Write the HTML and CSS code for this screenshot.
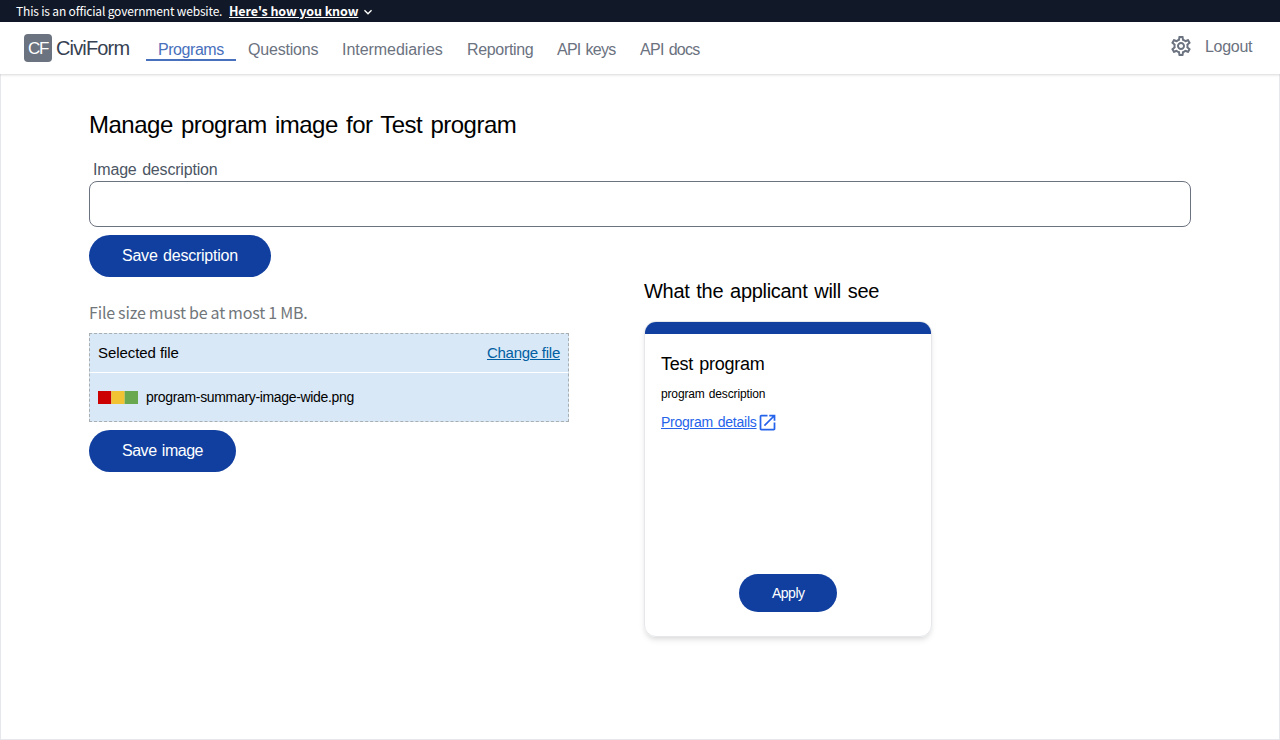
FILE: index.html
```html
<!DOCTYPE html>
<html lang="en">
<head>
<meta charset="utf-8">
<title>Manage program image</title>
<link rel="stylesheet" href="styles.css">
</head>
<body>
<div class="banner"><span class="banner-text">This is an official government website.</span><a class="banner-link">Here's how you know</a><svg class="chevron" viewBox="0 0 24 24"><path fill="currentColor" d="M16.59 8.59 12 13.17 7.41 8.59 6 10l6 6 6-6z"/></svg></div>
<header class="header">
  <div class="logo">CF</div><div class="brand">CiviForm</div>
  <nav class="nav">
    <a class="nav-item active t-programs">Programs</a>
    <a class="nav-item t-questions">Questions</a>
    <a class="nav-item t-intermediaries">Intermediaries</a>
    <a class="nav-item t-reporting">Reporting</a>
    <a class="nav-item t-keys">API keys</a>
    <a class="nav-item t-docs">API docs</a>
  </nav>
  <div class="account">
    <svg class="gear" viewBox="0 0 24 24"><path fill="currentColor" d="M19.43 12.98c.04-.32.07-.64.07-.98 0-.34-.03-.66-.07-.98l2.11-1.65c.19-.15.24-.42.12-.64l-2-3.46c-.09-.16-.26-.25-.44-.25-.06 0-.12.01-.17.03l-2.49 1c-.52-.4-1.08-.73-1.69-.98l-.38-2.65C14.46 2.18 14.25 2 14 2h-4c-.25 0-.46.18-.49.42l-.38 2.65c-.61.25-1.17.59-1.69.98l-2.49-1c-.06-.02-.12-.03-.18-.03-.17 0-.34.09-.43.25l-2 3.46c-.13.22-.07.49.12.64l2.11 1.65c-.04.32-.07.65-.07.98 0 .33.03.66.07.98l-2.11 1.65c-.19.15-.24.42-.12.64l2 3.46c.09.16.26.25.44.25.06 0 .12-.01.17-.03l2.49-1c.52.4 1.08.73 1.69.98l.38 2.65c.03.24.24.42.49.42h4c.25 0 .46-.18.49-.42l.38-2.65c.61-.25 1.17-.59 1.69-.98l2.49 1c.06.02.12.03.18.03.17 0 .34-.09.43-.25l2-3.46c.12-.22.07-.49-.12-.64l-2.11-1.65zm-1.98-1.71c.04.31.05.52.05.73 0 .21-.02.43-.05.73l-.14 1.13.89.7 1.08.84-.7 1.21-1.27-.51-1.04-.42-.9.68c-.43.32-.84.56-1.25.73l-1.06.43-.16 1.13-.2 1.35h-1.4l-.19-1.35-.16-1.13-1.06-.43c-.43-.18-.83-.41-1.23-.71l-.91-.7-1.06.43-1.27.51-.7-1.21 1.08-.84.89-.7-.14-1.13c-.03-.31-.05-.54-.05-.74s.02-.43.05-.73l.14-1.13-.89-.7-1.08-.84.7-1.21 1.27.51 1.04.42.9-.68c.43-.32.84-.56 1.25-.73l1.06-.43.16-1.13.2-1.35h1.39l.19 1.35.16 1.13 1.06.43c.43.18.83.41 1.23.71l.91.7 1.06-.43 1.27-.51.7 1.21-1.07.85-.89.7.14 1.13zM12 8c-2.21 0-4 1.79-4 4s1.79 4 4 4 4-1.79 4-4-1.79-4-4-4zm0 6c-1.1 0-2-.9-2-2s.9-2 2-2 2 .9 2 2-.9 2-2 2z"/></svg>
    <a class="logout">Logout</a>
  </div>
</header>
<main class="main">
  <h1 class="title">Manage program image for Test program</h1>
  <label class="label" for="desc">Image description</label>
  <input class="input" id="desc" type="text">
  <button class="button save-description">Save description</button>
  <div class="columns">
    <section class="upload">
      <p class="hint">File size must be at most 1 MB.</p>
      <div class="dropzone">
        <div class="drop-head"><span class="selected">Selected file</span><a class="change">Change file</a></div>
        <div class="drop-file"><svg class="thumb" viewBox="0 0 40 13" preserveAspectRatio="none"><path fill="#c00" d="M0 0h13.3v13H0z"/><path fill="#f1c232" d="M13.3 0h13.4v13H13.3z"/><path fill="#6aa84f" d="M26.7 0H40v13H26.7z"/></svg><span class="filename">program-summary-image-wide.png</span></div>
      </div>
      <button class="button save-image">Save image</button>
    </section>
    <section class="preview">
      <h2 class="subtitle">What the applicant will see</h2>
      <article class="card">
        <div class="card-top"></div>
        <div class="card-body">
          <h3 class="card-title">Test program</h3>
          <p class="card-desc">program description</p>
          <div class="details"><a class="details-link">Program details</a><svg class="external" viewBox="0 0 24 24"><path fill="currentColor" d="M19 19H5V5h7V3H5c-1.11 0-2 .9-2 2v14c0 1.1.89 2 2 2h14c1.1 0 2-.9 2-2v-7h-2v7zM14 3v2h3.59l-9.83 9.83 1.41 1.41L19 6.41V10h2V3h-7z"/></svg></div>
        </div>
        <button class="button apply">Apply</button>
      </article>
    </section>
  </div>
</main>
</body>
</html>
```
FILE: styles.css
```css
* { box-sizing: border-box; }
body { margin: 0; height: 740px; display: flex; flex-direction: column; overflow: hidden; background: #fff; color: #000; font: 16px/24px "Liberation Sans", Arial, sans-serif; }
h1, h2, h3, p { margin: 0; font-weight: 400; }

.banner { height: 22px; flex: none; display: flex; align-items: center; padding-left: 16px; background: #111827; color: #fff; font: 12.5px/22px "Noto Sans CJK SC", sans-serif; white-space: nowrap; }
.banner-text { width: 213px; font-size: 12px; letter-spacing: -.17px; }
.banner-link { width: 129px; font-weight: 700; text-decoration: underline; letter-spacing: -.1px; }
.chevron { width: 16px; height: 16px; margin: 2px 0 0 2px; }

.header { position: relative; height: 52px; flex: none; display: flex; align-items: flex-start; padding: 0 28px 0 24px; background: #fff; box-shadow: 0 1px 3px rgba(0,0,0,.1), 0 1px 2px rgba(0,0,0,.06); color: #6b7280; white-space: nowrap; }
.logo { width: 28px; height: 28px; margin-top: 12px; padding-left: 4px; border-radius: 4px; background: #6b7280; color: #fff; font-size: 17px; line-height: 29px; letter-spacing: -1.2px; }
.brand { width: 90px; margin: 12px 0 0 4px; color: #374151; font-size: 20px; line-height: 28px; letter-spacing: -.85px; }
.nav { display: flex; margin-top: 15px; }
.nav-item { height: 24px; padding-left: 12px; border-bottom: 2px solid transparent; line-height: 25px; }
.active { color: #4870bc; border-color: #4870bc; }
.t-programs { width: 90px; letter-spacing: -.45px; }
.t-questions { width: 94px; letter-spacing: -.2px; }
.t-intermediaries { width: 125px; letter-spacing: -.05px; }
.t-reporting { width: 90px; letter-spacing: -.33px; }
.t-keys { width: 83px; letter-spacing: -.75px; word-spacing: 1.3px; }
.t-docs { width: 84px; letter-spacing: -.72px; word-spacing: 1.3px; }
.account { display: flex; align-items: flex-start; margin: 12px 0 0 auto; }
.gear { width: 24px; height: 24px; margin-right: 12px; }
.logout { width: 47px; line-height: 25px; letter-spacing: -.3px; }

.main { flex: 1; padding: 31px 88px 0; border: 1px solid #e5e7eb; border-top: 0; }
.title { font-size: 24px; line-height: 40px; letter-spacing: -.5px; word-spacing: 2px; }
.label { display: block; margin-top: 12px; padding-left: 4px; color: #4b5563; height: 24px; line-height: 25px; letter-spacing: -.18px; word-spacing: 1.3px; }
.input { display: block; width: 100%; height: 46px; border: 1px solid #6b7280; border-radius: 8px; background: #fff; }
.button { display: block; height: 42px; padding: 0 0 0 33px; border: 0; border-radius: 21px; background: #113f9f; color: #fff; font: 16px/42px "Liberation Sans", Arial, sans-serif; text-align: left; white-space: nowrap; }
.save-description { width: 182px; margin-top: 8px; letter-spacing: -.23px; word-spacing: 1.3px; }
.columns { display: flex; }
.upload { width: 480px; margin-right: 75px; padding-top: 24px; }
.hint { height: 24px; color: #71767a; font: 16px/22px "Noto Sans CJK SC", sans-serif; letter-spacing: -.16px; word-spacing: -.3px; white-space: nowrap; }
.dropzone { height: 89px; margin-top: 8px; border: 1px dashed #a9aeb1; background: #d9e8f6; }
.drop-head { height: 39px; display: flex; justify-content: space-between; padding: 0 8px; border-bottom: 1px solid #fff; font-size: 15px; line-height: 38px; letter-spacing: -.07px; }
.change { color: #005ea2; text-decoration: underline; letter-spacing: -.26px; }
.drop-file { height: 48px; display: flex; align-items: center; padding-left: 8px; font-size: 14px; }
.thumb { width: 40px; height: 13px; margin-right: 8px; }
.filename { line-height: 22px; margin-top: -1px; letter-spacing: -.33px; }
.save-image { width: 147px; margin-top: 8px; letter-spacing: -.48px; word-spacing: 1.3px; }

.subtitle { font-size: 20px; line-height: 28px; letter-spacing: -.3px; word-spacing: 1.6px; }
.card { width: 288px; height: 316px; margin-top: 16px; display: flex; flex-direction: column; border: 1px solid #e5e7eb; border-radius: 12px; overflow: hidden; box-shadow: 0 4px 6px -1px rgba(0,0,0,.1), 0 2px 4px -1px rgba(0,0,0,.06); }
.card-top { height: 12px; flex: none; background: #113f9f; }
.card-body { flex: 1; padding: 16px; }
.card-title { font-size: 18px; line-height: 28px; letter-spacing: -.26px; word-spacing: 1.5px; }
.card-desc { margin-top: 8px; font-size: 12px; line-height: 16px; letter-spacing: -.15px; word-spacing: 1px; }
.details { display: flex; margin-top: 10px; color: #2563eb; font-size: 14px; line-height: 20px; letter-spacing: -.24px; word-spacing: 1.1px; }
.details-link { text-decoration: underline; }
.external { width: 21px; height: 21px; }
.apply { width: 98px; height: 38px; align-self: center; margin-bottom: 24px; border-radius: 19px; font-size: 14px; line-height: 38px; letter-spacing: -.5px; }
```
